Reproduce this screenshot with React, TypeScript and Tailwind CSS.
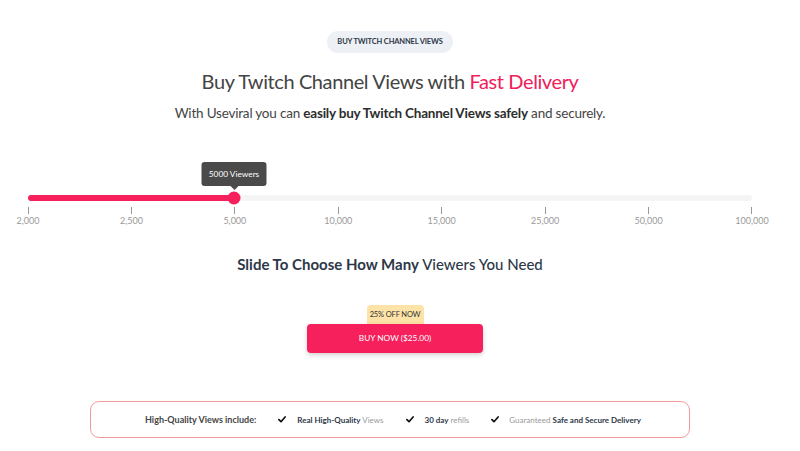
import React from "react";

const ticks = ["2,000", "2,500", "5,000", "10,000", "15,000", "25,000", "50,000", "100,000"];

function Check() {
  return (
    <svg width="8" height="7" viewBox="0 0 8 7" className="shrink-0">
      <path d="M0.9 3.6 L3 5.7 L7.1 1" fill="none" stroke="#111" strokeWidth="1.7" strokeLinecap="round" strokeLinejoin="round" />
    </svg>
  );
}

export default function App() {
  return (
    <div className="w-[800px] h-[451px] bg-white overflow-hidden" style={{ fontFamily: "Lato, 'Noto Sans', sans-serif" }}>
      <div className="w-[780px] flex flex-col items-center">
        <div className="mt-[31px] h-[22px] px-[10px] rounded-full bg-[#edf1f6] flex items-center text-[7.5px] font-bold text-[#2d3748] tracking-[-0.15px]">
          BUY TWITCH CHANNEL VIEWS
        </div>
        <h1 className="mt-[14px] text-[20px] leading-[28px] text-[#444] font-normal tracking-[-0.4px]">
          Buy Twitch Channel Views with <span className="text-[#f0205b]">Fast Delivery</span>
        </h1>
        <p className="mt-[8px] text-[13.5px] leading-[20px] text-[#444] tracking-[-0.2px]">
          With Useviral you can <b className="font-bold text-[#2d2d2d]">easily buy Twitch Channel Views safely</b> and securely.
        </p>

        <div className="mt-[39px] w-[724px]">
          <div className="relative h-[28px]">
            <div className="absolute left-[206px] -translate-x-1/2 top-0 w-[65px] h-[24px] rounded-[3px] bg-[#4a4a4a] text-white text-[8.3px] flex items-center justify-center whitespace-nowrap">
              5000 Viewers
              <div className="absolute left-1/2 -translate-x-1/2 top-[24px] w-0 h-0 border-l-[4px] border-r-[4px] border-t-[4px] border-l-transparent border-r-transparent border-t-[#4a4a4a]" />
            </div>
          </div>
          <div className="relative h-[6px] mt-[5px] rounded-full bg-[#f5f5f5]">
            <div className="h-full w-[206px] rounded-full bg-[#f5205c]" />
            <div className="absolute left-[206px] top-1/2 -translate-x-1/2 -translate-y-1/2 w-[13px] h-[13px] rounded-full bg-[#f5205c]" />
          </div>
          <div className="flex justify-between mt-[6px]">
            {ticks.map((t) => (
              <div key={t} className="w-0 flex flex-col items-center">
                <div className="w-px h-[7px] bg-[#999]" />
                <div className="mt-[1px] text-[9px] leading-[12px] text-[#999] whitespace-nowrap">{t}</div>
              </div>
            ))}
          </div>
        </div>

        <h2 className="mt-[27px] text-[15px] leading-[20px] text-[#2d3748] font-bold">
          Slide To Choose How Many <span className="font-medium">Viewers You Need</span>
        </h2>

        <div className="ml-[10px] mt-[31px] h-[19px] w-[57px] rounded-t-[4px] bg-[#fde3a7] flex items-center justify-center text-[7.5px] text-[#333] tracking-[-0.15px]">
          25% OFF NOW
        </div>
        <button className="ml-[10px] w-[176px] h-[29px] rounded-[4px] bg-[#f5205c] text-white text-[8.3px] shadow-[0_2px_5px_rgba(0,0,0,0.18)]">
          BUY NOW ($25.00)
        </button>

        <div className="mt-[48px] w-[600px] h-[37px] rounded-[9px] border border-[#f29a9a] flex items-center text-[8px] text-[#2d3748]">
          <span className="ml-[54px] font-bold text-[9px] text-[#444]">High-Quality Views include:</span>
          <span className="ml-[22px] flex items-center"><Check /><span className="ml-[11px]"><b className="font-bold">Real High-Quality</b> <span className="text-[#999]">Views</span></span></span>
          <span className="ml-[22px] flex items-center"><Check /><span className="ml-[11px]"><b className="font-bold">30 day</b> <span className="text-[#999]">refills</span></span></span>
          <span className="ml-[22px] flex items-center"><Check /><span className="ml-[10px]"><span className="text-[#999]">Guaranteed</span> <b className="font-bold">Safe and Secure Delivery</b></span></span>
        </div>
      </div>
    </div>
  );
}
